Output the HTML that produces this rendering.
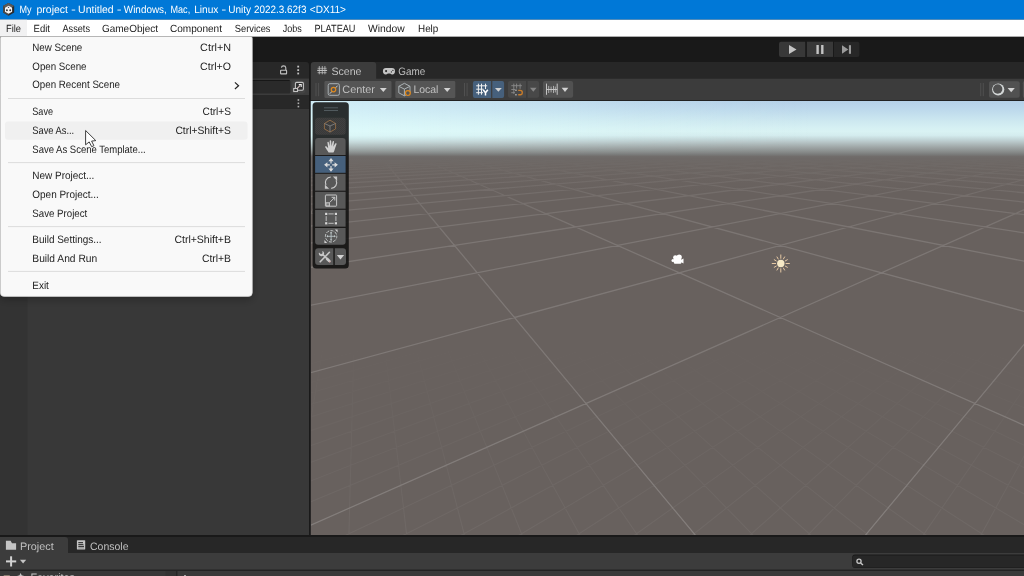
<!DOCTYPE html>
<html><head><meta charset="utf-8"><title>Unity</title>
<style>
html,body{margin:0;padding:0;background:#191919;overflow:hidden;}
svg{display:block;opacity:0.9999;}
text{font-family:"Liberation Sans",sans-serif;text-rendering:geometricPrecision;}
</style></head><body>
<svg width="1024" height="576" viewBox="0 0 1024 576">
<rect x="0" y="0" width="1024" height="576" fill="#191919" />
<rect x="0" y="0" width="1024" height="19.7" fill="#0078d7" />
<rect x="0" y="19.7" width="1024" height="17.1" fill="#ffffff" />
<rect x="0" y="36.8" width="1024" height="25.2" fill="#191919" />
<path d="M0 62 H306 Q309 62 309 65 V78.4 H0 Z" fill="#282828"/>
<rect x="0" y="78.4" width="309" height="17" fill="#3c3c3c" />
<rect x="0" y="80" width="290.4" height="13.5" fill="#2a2a2a" rx="1.5" />
<rect x="0" y="79.9" width="289.6" height="1" fill="#161616" />
<rect x="0" y="95" width="309" height="13.8" fill="#282828" />
<rect x="0" y="108.8" width="309" height="426.2" fill="#383838" />
<rect x="0" y="108.8" width="27.5" height="426.2" fill="#333333" />
<path d="M310.8 100.2 V65 Q310.8 62 313.8 62 H1024 V100.2 Z" fill="#3c3c3c"/>
<path d="M376.2 78.7 V65 Q376.2 62 373.2 62 H1024 V78.7 Z" fill="#272727"/>
<rect x="310.8" y="100.1" width="713.2" height="1.1" fill="#232323" />
<rect x="0" y="535" width="1024" height="2" fill="#191919" />
<rect x="0" y="537" width="1024" height="32.8" fill="#3c3c3c" />
<path d="M68 553.1 V540 Q68 537 65 537 H1024 V553.1 Z" fill="#272727"/>
<rect x="0" y="569.8" width="1024" height="1.2" fill="#232323" />
<rect x="0" y="571" width="1024" height="5" fill="#383838" />
<rect x="165.5" y="571" width="10.7" height="5" fill="#333333" />
<rect x="176.2" y="571" width="1.4" height="5" fill="#232323" />
<rect x="177.6" y="571" width="846.4" height="5" fill="#3a3a3a" />
<rect x="852.2" y="554.5" width="180" height="13.4" fill="#1b1b1b" rx="3" />
<rect x="852.6" y="555.6" width="180" height="12" fill="#272727" rx="2.6" />
<defs>
<clipPath id="sc"><rect x="310.8" y="101" width="713.2" height="434"/></clipPath>
<linearGradient id="sky" gradientUnits="userSpaceOnUse" x1="0" y1="101" x2="0" y2="535">
<stop offset="0.00000" stop-color="#b5d0e8"/>
<stop offset="0.02166" stop-color="#bedaec"/>
<stop offset="0.04562" stop-color="#cde8f0"/>
<stop offset="0.06221" stop-color="#d6f0f3"/>
<stop offset="0.07028" stop-color="#d9f2f3"/>
<stop offset="0.07926" stop-color="#d4ecee"/>
<stop offset="0.08756" stop-color="#c4d8da"/>
<stop offset="0.09378" stop-color="#b9c8ca"/>
<stop offset="0.10576" stop-color="#a0a8a8"/>
<stop offset="0.11774" stop-color="#878a89"/>
<stop offset="0.12442" stop-color="#777776"/>
<stop offset="0.12811" stop-color="#706c6a"/>
<stop offset="0.13249" stop-color="#6e6967"/>
<stop offset="0.14977" stop-color="#6c6663"/>
<stop offset="0.17512" stop-color="#6a6360"/>
<stop offset="0.20968" stop-color="#68615e"/>
<stop offset="1.00000" stop-color="#68615e"/>
</linearGradient>
<linearGradient id="fadeM" gradientUnits="userSpaceOnUse" x1="0" y1="157" x2="0" y2="277">
<stop offset="0" stop-color="#fff" stop-opacity="0"/><stop offset="0.07" stop-color="#fff" stop-opacity="0.14"/><stop offset="0.19" stop-color="#fff" stop-opacity="0.38"/><stop offset="0.4" stop-color="#fff" stop-opacity="0.68"/><stop offset="0.65" stop-color="#fff" stop-opacity="0.9"/><stop offset="1" stop-color="#fff" stop-opacity="1"/>
</linearGradient>
<mask id="mM" maskUnits="userSpaceOnUse" x="310.8" y="101" width="713.2" height="434"><rect x="310.8" y="101" width="713.2" height="434" fill="url(#fadeM)"/></mask>
<linearGradient id="fadeS" gradientUnits="userSpaceOnUse" x1="0" y1="330" x2="0" y2="535">
<stop offset="0" stop-color="#fff" stop-opacity="0"/><stop offset="0.44" stop-color="#fff" stop-opacity="0.5"/><stop offset="1" stop-color="#fff" stop-opacity="1"/>
</linearGradient>
<mask id="mS" maskUnits="userSpaceOnUse" x="310.8" y="101" width="713.2" height="434"><rect x="310.8" y="101" width="713.2" height="434" fill="url(#fadeS)"/></mask>
</defs>
<rect x="310.8" y="101" width="713.2" height="434" fill="url(#sky)"/>
<defs><linearGradient id="skyL" gradientUnits="userSpaceOnUse" x1="311" y1="0" x2="811" y2="0"><stop offset="0" stop-color="#e1ffff" stop-opacity="0.6"/><stop offset="0.1" stop-color="#e1ffff" stop-opacity="0.55"/><stop offset="0.4" stop-color="#e1ffff" stop-opacity="0.35"/><stop offset="0.62" stop-color="#e1ffff" stop-opacity="0.18"/><stop offset="0.82" stop-color="#e1ffff" stop-opacity="0.06"/><stop offset="1" stop-color="#e1ffff" stop-opacity="0"/></linearGradient>
<linearGradient id="skyLm" gradientUnits="userSpaceOnUse" x1="0" y1="100" x2="0" y2="156"><stop offset="0" stop-color="#fff"/><stop offset="0.64" stop-color="#fff"/><stop offset="0.8" stop-color="#fff" stop-opacity="0.45"/><stop offset="1" stop-color="#fff" stop-opacity="0"/></linearGradient>
<mask id="mSky" maskUnits="userSpaceOnUse" x="310" y="100" width="720" height="60"><rect x="310" y="100" width="720" height="60" fill="url(#skyLm)"/></mask></defs>
<g mask="url(#mSky)"><rect x="310.8" y="101" width="510" height="58" fill="url(#skyL)"/></g>
<g clip-path="url(#sc)"><g mask="url(#mS)"><path d="M-100041.9 5344.4L1044.9 139.5M-99296.5 5344.4L1046.1 139.5M-98551.0 5344.4L1047.2 139.5M-97805.6 5344.4L1048.4 139.5M-97060.1 5344.4L1049.5 139.5M-96314.7 5344.4L1050.7 139.5M-95569.2 5344.4L1051.8 139.5M-94823.8 5344.4L1053.0 139.5M-94078.3 5344.4L1054.1 139.5M-93332.9 5344.4L1055.3 139.5M-92587.4 5344.4L1056.4 139.5M-91842.0 5344.4L1057.6 139.5M-91096.5 5344.4L1058.7 139.5M-90351.1 5344.4L1059.9 139.5M-89605.6 5344.4L1061.0 139.5M-88860.2 5344.4L1062.2 139.5M-88114.7 5344.4L1063.3 139.5M-87369.3 5344.4L1064.5 139.5M-86623.8 5344.4L1065.6 139.5M-85878.4 5344.4L1066.8 139.5M-85132.9 5344.4L1067.9 139.5M-84387.5 5344.4L1069.1 139.5M-83642.0 5344.4L1070.2 139.5M-82896.6 5344.4L1071.4 139.5M-82151.1 5344.4L1072.5 139.5M-81405.7 5344.4L1073.7 139.5M-80660.2 5344.4L1074.8 139.5M-79914.7 5344.4L1076.0 139.5M-79169.3 5344.4L1077.1 139.5M-78423.8 5344.4L1078.3 139.5M-77678.4 5344.4L1079.4 139.5M-76932.9 5344.4L1080.6 139.5M-76187.5 5344.4L1081.7 139.5M-75442.0 5344.4L1082.9 139.5M-74696.6 5344.4L1084.0 139.5M-73951.1 5344.4L1085.2 139.5M-73205.7 5344.4L1086.3 139.5M-72460.2 5344.4L1087.5 139.5M-71714.8 5344.4L1088.6 139.5M-70969.3 5344.4L1089.8 139.5M-70223.9 5344.4L1090.9 139.5M-69478.4 5344.4L1092.1 139.5M-68733.0 5344.4L1093.2 139.5M-67987.5 5344.4L1094.4 139.5M-67242.1 5344.4L1095.5 139.5M-66496.6 5344.4L1096.7 139.5M-65751.2 5344.4L1097.8 139.5M-65005.7 5344.4L1099.0 139.5M-64260.3 5344.4L1100.1 139.5M-63514.8 5344.4L1101.3 139.5M-62769.4 5344.4L1102.4 139.5M-62023.9 5344.4L1103.6 139.5M-61278.5 5344.4L1104.7 139.5M-60533.0 5344.4L1105.9 139.5M-59787.6 5344.4L1107.0 139.5M-59042.1 5344.4L1108.2 139.5M-58296.6 5344.4L1109.3 139.5M-57551.2 5344.4L1110.5 139.5M-34069.5 5344.4L306.5 139.5M-56805.7 5344.4L1111.6 139.5M-33324.0 5344.4L307.7 139.5M-56060.3 5344.4L1112.8 139.5M-32578.6 5344.4L308.8 139.5M-55314.8 5344.4L1113.9 139.5M-31833.1 5344.4L310.0 139.5M-54569.4 5344.4L1115.1 139.5M-31087.7 5344.4L311.1 139.5M-53823.9 5344.4L1116.2 139.5M-30342.2 5344.4L312.3 139.5M-53078.5 5344.4L1117.4 139.5M-29596.8 5344.4L313.4 139.5M-52333.0 5344.4L1118.5 139.5M-28851.3 5344.4L314.6 139.5M-51587.6 5344.4L1119.7 139.5M-28105.9 5344.4L315.7 139.5M-50842.1 5344.4L1120.8 139.5M-27360.4 5344.4L316.9 139.5M-50096.7 5344.4L1122.0 139.5M-26615.0 5344.4L318.0 139.5M-49351.2 5344.4L1123.1 139.5M-25869.5 5344.4L319.2 139.5M-48605.8 5344.4L1124.3 139.5M-25124.0 5344.4L320.3 139.5M-47860.3 5344.4L1125.4 139.5M-24378.6 5344.4L321.5 139.5M-47114.9 5344.4L1126.6 139.5M-23633.1 5344.4L322.6 139.5M-46369.4 5344.4L1127.7 139.5M-22887.7 5344.4L323.8 139.5M-45624.0 5344.4L1128.9 139.5M-22142.2 5344.4L324.9 139.5M-44878.5 5344.4L1130.0 139.5M-21396.8 5344.4L326.1 139.5M-44133.1 5344.4L1131.2 139.5M-20651.3 5344.4L327.2 139.5M-43387.6 5344.4L1132.3 139.5M-19905.9 5344.4L328.4 139.5M-42642.2 5344.4L1133.5 139.5M-19160.4 5344.4L329.5 139.5M-41896.7 5344.4L1134.6 139.5M-18415.0 5344.4L330.7 139.5M-41151.3 5344.4L1135.8 139.5M-17669.5 5344.4L331.8 139.5M-40405.8 5344.4L1136.9 139.5M-16924.1 5344.4L333.0 139.5M-39660.4 5344.4L1138.1 139.5M-16178.6 5344.4L334.1 139.5M-38914.9 5344.4L1139.2 139.5M-15433.2 5344.4L335.3 139.5M-38169.5 5344.4L1140.4 139.5M-14687.7 5344.4L336.4 139.5M-37424.0 5344.4L1141.5 139.5M-13942.3 5344.4L337.6 139.5M-36678.5 5344.4L1142.7 139.5M-13196.8 5344.4L338.7 139.5M-35933.1 5344.4L1143.8 139.5M-12451.4 5344.4L339.9 139.5M-35187.6 5344.4L1145.0 139.5M-11705.9 5344.4L341.0 139.5M-34442.2 5344.4L1146.1 139.5M-10960.5 5344.4L342.2 139.5M-33696.7 5344.4L1147.3 139.5M-10215.0 5344.4L343.3 139.5M-32951.3 5344.4L1148.4 139.5M-9469.6 5344.4L344.5 139.5M-32205.8 5344.4L1149.6 139.5M-8724.1 5344.4L345.6 139.5M-31460.4 5344.4L1150.7 139.5M-7978.7 5344.4L346.8 139.5M-30714.9 5344.4L1151.9 139.5M-7233.2 5344.4L347.9 139.5M-29969.5 5344.4L1153.0 139.5M-6487.8 5344.4L349.1 139.5M-29224.0 5344.4L1154.2 139.5M-5742.3 5344.4L350.2 139.5M-28478.6 5344.4L1155.3 139.5M-4996.9 5344.4L351.4 139.5M-27733.1 5344.4L1156.5 139.5M-4251.4 5344.4L352.5 139.5M-26987.7 5344.4L1157.6 139.5M-3505.9 5344.4L353.7 139.5M-26242.2 5344.4L1158.8 139.5M-2760.5 5344.4L354.8 139.5M-25496.8 5344.4L1159.9 139.5M-2015.0 5344.4L356.0 139.5M-24751.3 5344.4L1161.1 139.5M-1269.6 5344.4L357.1 139.5M-24005.9 5344.4L1162.2 139.5M-524.1 5344.4L358.3 139.5M-23260.4 5344.4L1163.4 139.5M221.3 5344.4L359.4 139.5M-22515.0 5344.4L1164.5 139.5M966.8 5344.4L360.6 139.5M-21769.5 5344.4L1165.7 139.5M1712.2 5344.4L361.8 139.5M-21024.1 5344.4L1166.8 139.5M2457.7 5344.4L362.9 139.5M-20278.6 5344.4L1168.0 139.5M3203.1 5344.4L364.1 139.5M-19533.2 5344.4L1169.1 139.5M3948.6 5344.4L365.2 139.5M-18787.7 5344.4L1170.3 139.5M4694.0 5344.4L366.4 139.5M-18042.3 5344.4L1171.4 139.5M5439.5 5344.4L367.5 139.5M-17296.8 5344.4L1172.6 139.5M6184.9 5344.4L368.7 139.5M-16551.4 5344.4L1173.7 139.5M6930.4 5344.4L369.8 139.5M-15805.9 5344.4L1174.9 139.5M7675.8 5344.4L371.0 139.5M-15060.4 5344.4L1176.0 139.5M8421.3 5344.4L372.1 139.5M-14315.0 5344.4L1177.2 139.5M9166.7 5344.4L373.3 139.5M-13569.5 5344.4L1178.3 139.5M9912.2 5344.4L374.4 139.5M-12824.1 5344.4L1179.5 139.5M10657.6 5344.4L375.6 139.5M-12078.6 5344.4L1180.6 139.5M11403.1 5344.4L376.7 139.5M-11333.2 5344.4L1181.8 139.5M12148.5 5344.4L377.9 139.5M-10587.7 5344.4L1182.9 139.5M12894.0 5344.4L379.0 139.5M-9842.3 5344.4L1184.1 139.5M13639.4 5344.4L380.2 139.5M-9096.8 5344.4L1185.2 139.5M14384.9 5344.4L381.3 139.5M-8351.4 5344.4L1186.4 139.5M15130.3 5344.4L382.5 139.5M-7605.9 5344.4L1187.5 139.5M15875.8 5344.4L383.6 139.5M-6860.5 5344.4L1188.7 139.5M16621.2 5344.4L384.8 139.5M-6115.0 5344.4L1189.8 139.5M17366.7 5344.4L385.9 139.5M-5369.6 5344.4L1191.0 139.5M18112.2 5344.4L387.1 139.5M-4624.1 5344.4L1192.1 139.5M18857.6 5344.4L388.2 139.5M-3878.7 5344.4L1193.3 139.5M19603.1 5344.4L389.4 139.5M-3133.2 5344.4L1194.4 139.5M20348.5 5344.4L390.5 139.5M-2387.8 5344.4L1195.6 139.5M21094.0 5344.4L391.7 139.5M-1642.3 5344.4L1196.7 139.5M21839.4 5344.4L392.8 139.5M-896.9 5344.4L1197.9 139.5M22584.9 5344.4L394.0 139.5M-151.4 5344.4L1199.0 139.5M23330.3 5344.4L395.1 139.5M594.0 5344.4L1200.2 139.5M24075.8 5344.4L396.3 139.5M24821.2 5344.4L397.4 139.5M25566.7 5344.4L398.6 139.5M26312.1 5344.4L399.7 139.5M27057.6 5344.4L400.9 139.5M27803.0 5344.4L402.0 139.5M28548.5 5344.4L403.2 139.5M29293.9 5344.4L404.3 139.5M30039.4 5344.4L405.5 139.5M30784.8 5344.4L406.6 139.5M31530.3 5344.4L407.8 139.5M32275.7 5344.4L408.9 139.5M33021.2 5344.4L410.1 139.5M33766.6 5344.4L411.2 139.5M34512.1 5344.4L412.4 139.5M35257.5 5344.4L413.5 139.5M36003.0 5344.4L414.7 139.5M36748.4 5344.4L415.8 139.5M37493.9 5344.4L417.0 139.5M38239.3 5344.4L418.1 139.5M38984.8 5344.4L419.3 139.5M39730.3 5344.4L420.4 139.5M40475.7 5344.4L421.6 139.5M41221.2 5344.4L422.7 139.5M41966.6 5344.4L423.9 139.5M42712.1 5344.4L425.0 139.5M43457.5 5344.4L426.2 139.5M44203.0 5344.4L427.3 139.5M44948.4 5344.4L428.5 139.5M45693.9 5344.4L429.6 139.5M46439.3 5344.4L430.8 139.5M47184.8 5344.4L431.9 139.5M47930.2 5344.4L433.1 139.5M48675.7 5344.4L434.2 139.5M49421.1 5344.4L435.4 139.5M50166.6 5344.4L436.5 139.5M50912.0 5344.4L437.7 139.5M51657.5 5344.4L438.8 139.5M52402.9 5344.4L440.0 139.5M53148.4 5344.4L441.1 139.5M53893.8 5344.4L442.3 139.5M54639.3 5344.4L443.4 139.5M55384.7 5344.4L444.6 139.5M56130.2 5344.4L445.7 139.5M56875.6 5344.4L446.9 139.5M57621.1 5344.4L448.0 139.5M58366.5 5344.4L449.2 139.5M59112.0 5344.4L450.3 139.5M59857.4 5344.4L451.5 139.5M60602.9 5344.4L452.6 139.5M61348.4 5344.4L453.8 139.5M62093.8 5344.4L454.9 139.5M62839.3 5344.4L456.1 139.5M63584.7 5344.4L457.2 139.5M64330.2 5344.4L458.4 139.5M65075.6 5344.4L459.5 139.5M65821.1 5344.4L460.7 139.5M66566.5 5344.4L461.8 139.5M67312.0 5344.4L463.0 139.5M68057.4 5344.4L464.1 139.5M68802.9 5344.4L465.3 139.5M69548.3 5344.4L466.4 139.5M70293.8 5344.4L467.6 139.5M71039.2 5344.4L468.7 139.5M71784.7 5344.4L469.9 139.5M72530.1 5344.4L471.0 139.5M73275.6 5344.4L472.2 139.5M74021.0 5344.4L473.3 139.5M74766.5 5344.4L474.5 139.5M75511.9 5344.4L475.6 139.5M76257.4 5344.4L476.8 139.5M77002.8 5344.4L477.9 139.5M77748.3 5344.4L479.1 139.5M78493.7 5344.4L480.2 139.5M79239.2 5344.4L481.4 139.5M79984.6 5344.4L482.5 139.5M80730.1 5344.4L483.7 139.5M81475.5 5344.4L484.8 139.5M82221.0 5344.4L486.0 139.5M82966.5 5344.4L487.1 139.5M83711.9 5344.4L488.3 139.5M84457.4 5344.4L489.4 139.5M85202.8 5344.4L490.6 139.5M85948.3 5344.4L491.7 139.5M86693.7 5344.4L492.9 139.5M87439.2 5344.4L494.0 139.5M88184.6 5344.4L495.2 139.5M88930.1 5344.4L496.3 139.5M89675.5 5344.4L497.5 139.5M90421.0 5344.4L498.6 139.5M91166.4 5344.4L499.8 139.5M91911.9 5344.4L500.9 139.5M92657.3 5344.4L502.1 139.5M93402.8 5344.4L503.2 139.5M94148.2 5344.4L504.4 139.5M94893.7 5344.4L505.5 139.5M95639.1 5344.4L506.7 139.5M96384.6 5344.4L507.8 139.5M97130.0 5344.4L509.0 139.5M97875.5 5344.4L510.1 139.5M98620.9 5344.4L511.3 139.5M99366.4 5344.4L512.4 139.5M100111.8 5344.4L513.6 139.5M100857.3 5344.4L514.7 139.5M101602.7 5344.4L515.9 139.5" stroke="#ffffff" stroke-width="1.1" stroke-opacity="0.052" fill="none"/></g></g>
<g clip-path="url(#sc)"><g mask="url(#mM)"><path d="M-577131.0 5344.4L308.8 139.5M-569676.5 5344.4L320.3 139.5M-562222.0 5344.4L331.8 139.5M-554767.5 5344.4L343.3 139.5M-547313.0 5344.4L354.8 139.5M-539858.4 5344.4L366.4 139.5M-532403.9 5344.4L377.9 139.5M-524949.4 5344.4L389.4 139.5M-517494.9 5344.4L400.9 139.5M-510040.4 5344.4L412.4 139.5M-502585.9 5344.4L423.9 139.5M-495131.3 5344.4L435.4 139.5M-487676.8 5344.4L446.9 139.5M-480222.3 5344.4L458.4 139.5M-472767.8 5344.4L469.9 139.5M-465313.3 5344.4L481.4 139.5M-457858.8 5344.4L492.9 139.5M-450404.2 5344.4L504.4 139.5M-442949.7 5344.4L515.9 139.5M-435495.2 5344.4L527.4 139.5M-428040.7 5344.4L538.9 139.5M-420586.2 5344.4L550.4 139.5M-413131.7 5344.4L561.9 139.5M-405677.1 5344.4L573.4 139.5M-398222.6 5344.4L584.9 139.5M-390768.1 5344.4L596.4 139.5M-383313.6 5344.4L607.9 139.5M-375859.1 5344.4L619.4 139.5M-368404.6 5344.4L630.9 139.5M-360950.0 5344.4L642.4 139.5M-353495.5 5344.4L653.9 139.5M-346041.0 5344.4L665.4 139.5M-338586.5 5344.4L676.9 139.5M-331132.0 5344.4L688.4 139.5M-323677.5 5344.4L699.9 139.5M-316222.9 5344.4L711.4 139.5M-308768.4 5344.4L722.9 139.5M-301313.9 5344.4L734.4 139.5M-293859.4 5344.4L745.9 139.5M-286404.9 5344.4L757.4 139.5M-278950.4 5344.4L768.9 139.5M-271495.8 5344.4L780.4 139.5M-264041.3 5344.4L791.9 139.5M-256586.8 5344.4L803.4 139.5M-249132.3 5344.4L814.9 139.5M-241677.8 5344.4L826.4 139.5M-234223.2 5344.4L837.9 139.5M-226768.7 5344.4L849.4 139.5M-219314.2 5344.4L860.9 139.5M-211859.7 5344.4L872.4 139.5M-204405.2 5344.4L883.9 139.5M-196950.7 5344.4L895.4 139.5M-189496.1 5344.4L906.9 139.5M-182041.6 5344.4L918.4 139.5M-174587.1 5344.4L929.9 139.5M-167132.6 5344.4L941.4 139.5M-159678.1 5344.4L952.9 139.5M-152223.6 5344.4L964.4 139.5M-144769.0 5344.4L975.9 139.5M-137314.5 5344.4L987.4 139.5M-129860.0 5344.4L998.9 139.5M-122405.5 5344.4L1010.4 139.5M-114951.0 5344.4L1021.9 139.5M-107496.5 5344.4L1033.4 139.5M-100041.9 5344.4L1044.9 139.5M-92587.4 5344.4L1056.4 139.5M-85132.9 5344.4L1067.9 139.5M-77678.4 5344.4L1079.4 139.5M-70223.9 5344.4L1090.9 139.5M-62769.4 5344.4L1102.4 139.5M-32578.6 5344.4L308.8 139.5M-55314.8 5344.4L1113.9 139.5M-25124.0 5344.4L320.3 139.5M-47860.3 5344.4L1125.4 139.5M-17669.5 5344.4L331.8 139.5M-40405.8 5344.4L1136.9 139.5M-10215.0 5344.4L343.3 139.5M-32951.3 5344.4L1148.4 139.5M-2760.5 5344.4L354.8 139.5M-25496.8 5344.4L1159.9 139.5M4694.0 5344.4L366.4 139.5M-18042.3 5344.4L1171.4 139.5M12148.5 5344.4L377.9 139.5M-10587.7 5344.4L1182.9 139.5M19603.1 5344.4L389.4 139.5M-3133.2 5344.4L1194.4 139.5M27057.6 5344.4L400.9 139.5M34512.1 5344.4L412.4 139.5M41966.6 5344.4L423.9 139.5M49421.1 5344.4L435.4 139.5M56875.6 5344.4L446.9 139.5M64330.2 5344.4L458.4 139.5M71784.7 5344.4L469.9 139.5M79239.2 5344.4L481.4 139.5M86693.7 5344.4L492.9 139.5M94148.2 5344.4L504.4 139.5M101602.7 5344.4L515.9 139.5M109057.3 5344.4L527.4 139.5M116511.8 5344.4L538.9 139.5M123966.3 5344.4L550.4 139.5M131420.8 5344.4L561.9 139.5M138875.3 5344.4L573.4 139.5M146329.8 5344.4L584.9 139.5M153784.4 5344.4L596.4 139.5M161238.9 5344.4L607.9 139.5M168693.4 5344.4L619.4 139.5M176147.9 5344.4L630.9 139.5M183602.4 5344.4L642.4 139.5M191056.9 5344.4L653.9 139.5M198511.5 5344.4L665.4 139.5M205966.0 5344.4L676.9 139.5M213420.5 5344.4L688.4 139.5M220875.0 5344.4L699.9 139.5M228329.5 5344.4L711.4 139.5M235784.0 5344.4L722.9 139.5M243238.6 5344.4L734.4 139.5M250693.1 5344.4L745.9 139.5M258147.6 5344.4L757.4 139.5M265602.1 5344.4L768.9 139.5M273056.6 5344.4L780.4 139.5M280511.2 5344.4L791.9 139.5M287965.7 5344.4L803.4 139.5M295420.2 5344.4L814.9 139.5M302874.7 5344.4L826.4 139.5M310329.2 5344.4L837.9 139.5M317783.7 5344.4L849.4 139.5M325238.3 5344.4L860.9 139.5M332692.8 5344.4L872.4 139.5M340147.3 5344.4L883.9 139.5M347601.8 5344.4L895.4 139.5M355056.3 5344.4L906.9 139.5M362510.8 5344.4L918.4 139.5M369965.4 5344.4L929.9 139.5M377419.9 5344.4L941.4 139.5M384874.4 5344.4L952.9 139.5M392328.9 5344.4L964.4 139.5M399783.4 5344.4L975.9 139.5M407237.9 5344.4L987.4 139.5M414692.5 5344.4L998.9 139.5M422147.0 5344.4L1010.4 139.5M429601.5 5344.4L1021.9 139.5" stroke="#ffffff" stroke-width="1.3" stroke-opacity="0.15" fill="none"/></g></g>
<g>
<path d="M8.65 2.9 L14.2 6.1 V12.5 L8.65 15.7 L3.1 12.5 V6.1 Z" fill="#2b2b2b"/>
<path d="M8.65 2.9 L3.1 6.1 V12.5 L8.65 15.7 Z" fill="#4a4a4a"/>
<path d="M8.65 2.9 L14.2 6.1 L8.65 9.3 L3.1 6.1 Z" fill="#5a5a5a"/>
<path d="M8.6 5.7 L12.1 7.7 V11.7 L8.6 13.7 L5 11.7 V7.7 Z" fill="#f4f4f4"/>
<circle cx="6.9" cy="10.3" r="0.95" fill="#333"/><circle cx="10.2" cy="10.3" r="0.95" fill="#333"/><circle cx="8.5" cy="7.4" r="0.7" fill="#556"/>
</g>
<text x="19.5" y="13.4" font-size="10.6" fill="#ffffff" textLength="12.1" lengthAdjust="spacingAndGlyphs" >My</text>
<text x="36.5" y="13.4" font-size="10.6" fill="#ffffff" textLength="31.5" lengthAdjust="spacingAndGlyphs" >project</text>
<rect x="71.7" y="9.6" width="3.5" height="0.9" fill="#ffffff" />
<text x="78.1" y="13.4" font-size="10.6" fill="#ffffff" textLength="35.6" lengthAdjust="spacingAndGlyphs" >Untitled</text>
<rect x="117.4" y="9.6" width="3.5" height="0.9" fill="#ffffff" />
<text x="123.8" y="13.4" font-size="10.6" fill="#ffffff" textLength="43.0" lengthAdjust="spacingAndGlyphs" >Windows,</text>
<text x="170.5" y="13.4" font-size="10.6" fill="#ffffff" textLength="19.7" lengthAdjust="spacingAndGlyphs" >Mac,</text>
<text x="194.15" y="13.4" font-size="10.6" fill="#ffffff" textLength="24.25" lengthAdjust="spacingAndGlyphs" >Linux</text>
<rect x="222" y="9.6" width="3.6" height="0.9" fill="#ffffff" />
<text x="228.2" y="13.4" font-size="10.6" fill="#ffffff" textLength="22.95" lengthAdjust="spacingAndGlyphs" >Unity</text>
<text x="254.0" y="13.4" font-size="10.6" fill="#ffffff" textLength="52.4" lengthAdjust="spacingAndGlyphs" >2022.3.62f3</text>
<text x="309.8" y="13.4" font-size="10.6" fill="#ffffff" textLength="36.2" lengthAdjust="spacingAndGlyphs" >&lt;DX11&gt;</text>
<rect x="0" y="19.7" width="27" height="16.2" fill="#f1f1f2" />
<text x="6" y="31.6" font-size="10.4" fill="#1a1a1a" textLength="15" lengthAdjust="spacingAndGlyphs" >File</text>
<text x="33.6" y="31.6" font-size="10.4" fill="#1a1a1a" textLength="16.4" lengthAdjust="spacingAndGlyphs" >Edit</text>
<text x="62.5" y="31.6" font-size="10.4" fill="#1a1a1a" textLength="27.5" lengthAdjust="spacingAndGlyphs" >Assets</text>
<text x="102" y="31.6" font-size="10.4" fill="#1a1a1a" textLength="56" lengthAdjust="spacingAndGlyphs" >GameObject</text>
<text x="170" y="31.6" font-size="10.4" fill="#1a1a1a" textLength="52" lengthAdjust="spacingAndGlyphs" >Component</text>
<text x="234.8" y="31.6" font-size="10.4" fill="#1a1a1a" textLength="35.7" lengthAdjust="spacingAndGlyphs" >Services</text>
<text x="282.8" y="31.6" font-size="10.4" fill="#1a1a1a" textLength="19.0" lengthAdjust="spacingAndGlyphs" >Jobs</text>
<text x="314.4" y="31.6" font-size="10.4" fill="#1a1a1a" textLength="41.1" lengthAdjust="spacingAndGlyphs" >PLATEAU</text>
<text x="368" y="31.6" font-size="10.4" fill="#1a1a1a" textLength="36.7" lengthAdjust="spacingAndGlyphs" >Window</text>
<text x="418" y="31.6" font-size="10.4" fill="#1a1a1a" textLength="20.3" lengthAdjust="spacingAndGlyphs" >Help</text>
<path d="M781 41.7 H805.2 V56.9 H781 Q779 56.9 779 54.9 V43.7 Q779 41.7 781 41.7 Z" fill="#383838"/>
<rect x="806.9" y="41.7" width="26.1" height="15.2" fill="#383838" />
<path d="M834 41.7 H857.4 Q859.4 41.7 859.4 43.7 V54.9 Q859.4 56.9 857.4 56.9 H834 Z" fill="#272727"/>
<path d="M789 45 L796.5 49.5 L789 54 Z" fill="#c4c4c4"/>
<rect x="816.4" y="45" width="2.4" height="9" fill="#c4c4c4" />
<rect x="821.1" y="45" width="2.4" height="9" fill="#c4c4c4" />
<path d="M842 45.2 L848.3 49.5 L842 53.8 Z" fill="#9a9a9a"/>
<rect x="848.9" y="45.2" width="2.1" height="8.6" fill="#9a9a9a" />
<g fill="none" stroke="#c4c4c4" stroke-width="1.1"><rect x="280.6" y="70.2" width="6" height="3.7" rx="0.5"/><path d="M281.4 67.6 Q281.6 65.9 283.6 65.9 Q285.6 65.9 285.8 67.8 V70"/></g>
<rect x="297.3" y="65.69999999999999" width="1.8" height="1.8" fill="#c4c4c4" />
<rect x="297.3" y="69.19999999999999" width="1.8" height="1.8" fill="#c4c4c4" />
<rect x="297.3" y="72.6" width="1.8" height="1.8" fill="#c4c4c4" />
<rect x="297.6" y="99.2" width="1.6" height="1.6" fill="#b0b0b0" />
<rect x="297.6" y="102.5" width="1.6" height="1.6" fill="#b0b0b0" />
<rect x="297.6" y="105.8" width="1.6" height="1.6" fill="#b0b0b0" />
<rect x="292" y="80.5" width="13.4" height="13" fill="#434343" rx="3" />
<g fill="none" stroke="#c4c4c4" stroke-width="1.1"><rect x="295.4" y="82.4" width="8" height="7.9" rx="1.2" fill="#303030"/><rect x="293.7" y="88.5" width="3.8" height="3" fill="#303030"/><path d="M297.3 88.3 L299.9 85.6" stroke="#d8c4c4"/><path d="M298.8 84.6 H301.2 V87" stroke="#f0f0f0"/></g>
<g stroke="#c4c4c4" stroke-width="0.9" fill="none">
<path d="M319.3 66 V74.3 M322.3 66 V74.3 M324.9 66 V74.3" stroke-opacity="0.85"/>
<path d="M317.6 68.3 H326.6 M317.6 72.7 H326.6" stroke-opacity="0.8"/><path d="M317.2 70.4 H327.1" stroke-width="1.1"/>
</g>
<text x="331.4" y="75" font-size="10.8" fill="#c0c0c0" textLength="30.1" lengthAdjust="spacingAndGlyphs" >Scene</text>
<path d="M386 68.1 H392 Q395 68.1 395 71.3 Q395 74.4 392.3 74.4 Q391 74.4 390.2 73.4 H387.8 Q387 74.4 385.7 74.4 Q382.9 74.4 382.9 71.3 Q382.9 68.1 386 68.1 Z" fill="#c4c4c4"/>
<circle cx="386.1" cy="71.1" r="1.05" fill="#282828"/><circle cx="391.4" cy="71.9" r="0.65" fill="#282828"/><circle cx="392.9" cy="70.4" r="0.65" fill="#282828"/>
<text x="398.3" y="74.8" font-size="10.8" fill="#c0c0c0" textLength="26.9" lengthAdjust="spacingAndGlyphs" >Game</text>
<rect x="315.5" y="83" width="1" height="13.2" fill="#505050" />
<rect x="318.1" y="83" width="1" height="13.2" fill="#505050" />
<rect x="464" y="83" width="1" height="13.2" fill="#505050" />
<rect x="466.6" y="83" width="1" height="13.2" fill="#505050" />
<rect x="980.2" y="83" width="1" height="13.2" fill="#505050" />
<rect x="982.8000000000001" y="83" width="1" height="13.2" fill="#505050" />
<rect x="324.4" y="81.1" width="67.1" height="17" fill="#555555" rx="1.3" />
<rect x="328.2" y="83.7" width="11.2" height="11.6" rx="1.6" fill="none" stroke="#aab1b4" stroke-width="1"/>
<path d="M329.8 93.7 L337.7 85.6" stroke="#c8cccc" stroke-width="1"/>
<circle cx="333.5" cy="89.6" r="2.25" fill="#555555" stroke="#e08a1e" stroke-width="1.15"/>
<text x="342.3" y="93.2" font-size="10.8" fill="#c0c0c0" textLength="32.6" lengthAdjust="spacingAndGlyphs" >Center</text>
<path d="M379.85 88.05 H386.75 L383.3 91.95 Z" fill="#d2d2d2"/>
<rect x="395.3" y="81.1" width="60" height="17" fill="#555555" rx="1.3" />
<g fill="none" stroke="#aab1b4" stroke-width="1" stroke-linejoin="round"><path d="M404.4 83.3 L410 86.3 V92.8 L404.4 95.8 L398.8 92.8 V86.3 Z"/><path d="M398.8 86.3 L404.4 89.1 L410 86.3 M404.4 89.1 V95.8"/></g>
<circle cx="407.9" cy="93.1" r="2.4" fill="#555555" stroke="#e08a1e" stroke-width="1.2"/>
<text x="413.4" y="93.2" font-size="10.8" fill="#c0c0c0" textLength="25.0" lengthAdjust="spacingAndGlyphs" >Local</text>
<path d="M443.84999999999997 88.05 H450.55 L447.2 91.95 Z" fill="#d2d2d2"/>
<path d="M474.9 81 H491.1 V98 H474.9 Q472.9 98 472.9 96 V83 Q472.9 81 474.9 81 Z" fill="#46607c"/>
<path d="M492.3 81 H502.1 Q504.1 81 504.1 83 V96 Q504.1 98 502.1 98 H492.3 Z" fill="#46607c"/>
<g stroke="#f0f0f0" stroke-width="1" fill="none"><path d="M478.4 83.7 V94.7 M481.5 83.7 V94.7 M485.5 83.7 V89"/><path d="M476.2 85.8 H487.2 M476.2 89.2 H483.4 M476.2 92.7 H483"/></g>
<path d="M483.2 89.8 L485.5 92.7 V95.5 M487.8 89.8 L485.5 92.7" stroke="#ffffff" stroke-width="1.5" fill="none"/>
<path d="M495.0 87.95 H501.79999999999995 L498.4 91.85000000000001 Z" fill="#d2d2d2"/>
<path d="M510 81.1 H526 V97.8 H510 Q508 97.8 508 95.8 V83.1 Q508 81.1 510 81.1 Z" fill="#484848"/>
<path d="M527.6 81.1 H537.1 Q539.1 81.1 539.1 83.1 V95.8 Q539.1 97.8 537.1 97.8 H527.6 Z" fill="#484848"/>
<g stroke="#8a8a8a" stroke-width="0.9" fill="none"><path d="M513.8 83.6 V93.8 M516.6 83.6 V88.5 M520.1 83.6 V88.8"/><path d="M511.3 85.7 H521.9 M511.3 89.5 H515 M511.3 92.7 H515"/></g>
<rect x="515.2" y="89.5" width="1.5" height="1.5" fill="#a8a8a8" />
<rect x="515.2" y="94" width="1.5" height="1.5" fill="#a8a8a8" />
<path d="M518.2 90.3 H520.3 Q522.3 90.3 522.3 92.5 Q522.3 94.7 520.3 94.7 H518.2" fill="none" stroke="#c87c2a" stroke-width="1.35"/>
<path d="M530.0 87.85 H536.5999999999999 L533.3 91.75 Z" fill="#858585"/>
<rect x="543" y="81.1" width="30.1" height="16.7" fill="#515151" rx="2" />
<g stroke="#c4c4c4" stroke-width="1" fill="none"><path d="M546.5 83.6 V94.8 M557.2 83.6 V94.8"/><path d="M548.7 85.9 V93 M551.1 86.6 V92.4 M553.5 85.9 V93 M555.3 86.6 V92.4" stroke-opacity="0.8"/><path d="M546.5 89.5 H557.2"/></g>
<path d="M561.65 87.85000000000001 H568.35 L565 91.95 Z" fill="#d2d2d2"/>
<rect x="989" y="81.2" width="30.7" height="16.5" fill="#515151" rx="2" />
<circle cx="998.2" cy="89.5" r="6.1" fill="#d2d6d6"/><circle cx="997.7" cy="89" r="4.7" fill="#515151"/>
<path d="M1007.6 87.94999999999999 H1014.8000000000001 L1011.2 92.25 Z" fill="#d2d2d2"/>
<rect x="1022.8" y="81.2" width="3" height="16.5" fill="#515151" rx="2" />
<path d="M5.9 540.8 H10.6 L12 543.2 H16.1 V549.8 H5.9 Z" fill="#c4c4c4"/>
<text x="20" y="549.8" font-size="10.8" fill="#c0c0c0" textLength="33.7" lengthAdjust="spacingAndGlyphs" >Project</text>
<rect x="76.9" y="540.2" width="8.3" height="9.3" rx="0.6" fill="#c4c4c4"/>
<path d="M78.3 542.6 H83 M78.3 544.5 H83.4 M78.3 546.4 H84" stroke="#3a3a3a" stroke-width="1.1"/><path d="M78.3 547.9 H84" stroke="#555" stroke-width="0.6"/>
<text x="90" y="549.7" font-size="10.8" fill="#c0c0c0" textLength="38.5" lengthAdjust="spacingAndGlyphs" >Console</text>
<rect x="6" y="560.4" width="10.2" height="2" fill="#d2d2d2" />
<rect x="10.1" y="556.3" width="2" height="10.2" fill="#d2d2d2" />
<path d="M20.0 559.7 H26.200000000000003 L23.1 563.5 Z" fill="#c4c4c4"/>
<circle cx="859" cy="561.3" r="2.1" fill="none" stroke="#c8c8c8" stroke-width="1.3"/><path d="M860.6 562.9 L863 565.1" stroke="#c8c8c8" stroke-width="1.4"/>
<text x="30.5" y="580.8" font-size="10.8" fill="#c0c0c0" textLength="44.5" lengthAdjust="spacingAndGlyphs" >Favorites</text>
<path d="M20.6 572.9 L21.7 575.3 L24.2 576 H17 L19.5 575.3 Z" fill="#c4c4c4"/>
<rect x="3.7" y="575.2" width="6.1" height="1" fill="#a09080" />
<rect x="184.2" y="575" width="1.6" height="1" fill="#c4c4c4" />
<rect x="312.6" y="102.3" width="36.2" height="166.2" rx="3.5" fill="#0e0e0e" fill-opacity="0.86"/>
<rect x="324" y="107.3" width="14" height="1" fill="#515a5e" />
<rect x="324" y="110" width="14" height="1" fill="#515a5e" />
<defs><pattern id="dots" width="2" height="2" patternUnits="userSpaceOnUse"><rect width="2" height="2" fill="#404040"/><rect width="1" height="1" fill="#393939"/><rect x="1" y="1" width="1" height="1" fill="#393939"/></pattern></defs>
<rect x="315.1" y="117.8" width="30.5" height="17" rx="3" fill="url(#dots)"/>
<g fill="none" stroke-width="1" stroke-linejoin="round" stroke-opacity="0.78"><path d="M330 120.2 L335.6 123.5 V128.9 L330 132.1 L324.4 128.9 V123.5 Z" stroke="#a07448"/><path d="M324.4 123.5 L330 126 L335.6 123.5 M330 126 V132.1" stroke="#8a8a8a"/></g>
<path d="M318.1 138.1 H342.6 Q345.6 138.1 345.6 141.1 V155 H315.1 V141.1 Q315.1 138.1 318.1 138.1 Z" fill="#585858"/>
<path d="M328.6 152.6 C327.4 150.6 326 148.6 325.2 147.3 C324.8 146.4 325.8 145.8 326.6 146.6 L328.2 148.3 L327.4 142.6 C327.3 141.6 328.6 141.4 328.8 142.4 L329.7 146.3 L329.7 141 C329.7 139.9 331.1 139.9 331.2 141 L331.5 146.2 L332.6 141.6 C332.9 140.6 334.2 140.9 334 141.9 L333.3 146.7 L335.2 143.6 C335.8 142.8 336.9 143.4 336.5 144.3 C335.6 146.6 335 148.6 334.4 150.4 C334.1 151.4 333.7 152 333.4 152.6 Z" fill="#d2d2d2"/>
<rect x="315.1" y="156" width="30.5" height="16.8" fill="#46607c" />
<g stroke="#dcdcdc" stroke-width="1.15" fill="none"><path d="M331 160 V163.6 M331 166 V169.6 M326.2 164.8 H329.8 M332.2 164.8 H335.8"/></g>
<path d="M331 157.9 L333.6 161.2 H328.4 Z M331 171.7 L333.6 168.4 H328.4 Z M324.1 164.8 L327.4 162.2 V167.4 Z M337.9 164.8 L334.6 162.2 V167.4 Z" fill="#dcdcdc"/>
<rect x="315.1" y="173.8" width="30.5" height="16.9" fill="#585858" />
<g stroke="#c8c8c8" stroke-width="1.15" fill="none"><path d="M336.1 180.2 A5.7 5.7 0 0 1 331.2 188.4"/><path d="M325.9 185.2 A5.7 5.7 0 0 1 330.8 177"/></g>
<path d="M332.9 176.6 H337.1 V180.9 Z" fill="#c8c8c8"/><path d="M329.1 188.8 H324.9 V184.5 Z" fill="#c8c8c8"/>
<rect x="315.1" y="191.8" width="30.5" height="16.9" fill="#585858" />
<g stroke="#c8c8c8" stroke-width="1" fill="none"><rect x="325.4" y="195" width="11.2" height="11.2" rx="0.6"/><rect x="326" y="202.8" width="3.4" height="3.1" fill="#777"/><path d="M329.8 202.4 L334.6 197.5 M331.6 197.3 H334.8 V200.5"/></g>
<rect x="315.1" y="209.8" width="30.5" height="16.9" fill="#585858" />
<g fill="#d8d8d8">
<rect x="325.1" y="212.8" width="2.2" height="2.2"/>
<rect x="325.1" y="222.2" width="2.2" height="2.2"/>
<rect x="334.8" y="212.8" width="2.2" height="2.2"/>
<rect x="334.8" y="222.2" width="2.2" height="2.2"/>
</g>
<g stroke="#c8c8c8" stroke-width="0.9" fill="none"><path d="M328.4 213.9 H333.7 M328.4 223.3 H333.7 M326.2 216.2 V221.1 M335.9 216.2 V221.1"/></g>
<path d="M315.1 227.9 H345.6 V241.8 Q345.6 244.8 342.6 244.8 H318.1 Q315.1 244.8 315.1 241.8 Z" fill="#585858"/>
<circle cx="331.1" cy="236.3" r="5.7" fill="none" stroke="#c4c8c8" stroke-width="1" stroke-dasharray="3.2 1.2" stroke-dashoffset="1"/>
<g stroke="#b8c4c6" stroke-width="0.9" fill="none"><path d="M331.1 232.5 V240.1 M327.3 236.3 H334.9"/></g>
<path d="M331.1 231.6 L332.3 233.2 H329.9 Z M331.1 241 L332.3 239.4 H329.9 Z M326.4 236.3 L328 235.1 V237.5 Z M335.8 236.3 L334.2 235.1 V237.5 Z" fill="#c4cccc"/>
<path d="M337.6 229.6 V232.4 L334.8 229.6 Z M324.4 242.9 V240.1 L327.2 242.9 Z" fill="#d0d0d0"/>
<path d="M318.1 248.2 H333.3 V265 H318.1 Q315.1 265 315.1 262 V251.2 Q315.1 248.2 318.1 248.2 Z" fill="#585858"/>
<path d="M334.8 248.2 H343 Q346 248.2 346 251.2 V262 Q346 265 343 265 H334.8 Z" fill="#585858"/>
<g stroke="#c8c8c8" fill="none" stroke-linecap="round"><path d="M320.2 261.8 L329.4 252.3" stroke-width="1.6"/><path d="M323.3 255 L329.5 261.2" stroke-width="1.7"/></g>
<path d="M319 252.6 A2.6 2.6 0 1 0 322.2 251 L322.6 253.3 L321 254.2 Z" fill="#c8c8c8"/>
<path d="M327.2 259 L329.4 261.2" stroke="#c8c8c8" stroke-width="2.6" stroke-linecap="round"/>
<circle cx="329.9" cy="261.8" r="0.6" fill="#e09090"/>
<path d="M336.8 255.1 H344.1 L340.45 259.6 Z" fill="#d2d2d2"/>
<g fill="#ffffff"><circle cx="675.4" cy="257.6" r="2.3"/><circle cx="679.2" cy="257.1" r="2.6"/><rect x="673.8" y="258.6" width="7.6" height="5.2" rx="1.2"/><path d="M680.8 260 L683.5 258.6 V263.4 L680.8 262 Z"/><circle cx="673" cy="260.5" r="1.5"/></g>
<g stroke="#e6c9a4" stroke-width="1" stroke-linecap="round">
<path d="M786.00 263.50 L789.40 263.50"/>
<path d="M785.30 266.10 L787.38 267.30"/>
<path d="M783.40 268.00 L784.60 270.08"/>
<path d="M780.80 268.70 L780.80 272.10"/>
<path d="M778.20 268.00 L777.00 270.08"/>
<path d="M776.30 266.10 L774.22 267.30"/>
<path d="M775.60 263.50 L772.20 263.50"/>
<path d="M776.30 260.90 L774.22 259.70"/>
<path d="M778.20 259.00 L777.00 256.92"/>
<path d="M780.80 258.30 L780.80 254.90"/>
<path d="M783.40 259.00 L784.60 256.92"/>
<path d="M785.30 260.90 L787.38 259.70"/>
</g>
<circle cx="780.8" cy="263.5" r="3.7" fill="#f6e9c6"/>
<defs><filter id="sh" x="-20%" y="-10%" width="140%" height="125%"><feGaussianBlur in="SourceAlpha" stdDeviation="4"/><feOffset dx="0" dy="3"/><feComponentTransfer><feFuncA type="linear" slope="0.26"/></feComponentTransfer><feMerge><feMergeNode/><feMergeNode in="SourceGraphic"/></feMerge></filter></defs>
<clipPath id="mclip"><rect x="0" y="36.7" width="1024" height="540"/></clipPath><g clip-path="url(#mclip)">
<path d="M0.3 38.4 Q0.3 36.4 2.3 36.4 H250.3 Q252.3 36.4 252.3 38.4 V292.4 Q252.3 296.4 248.3 296.4 H4.3 Q0.3 296.4 0.3 292.4 Z" fill="#f9f9f9" stroke="#d6d6d6" stroke-width="0.6" filter="url(#sh)"/></g>
<rect x="5" y="121.4" width="242.6" height="18.3" fill="#f0f0f0" rx="3" />
<text x="32.3" y="50.85" font-size="10.7" fill="#222222" textLength="50.0" lengthAdjust="spacingAndGlyphs" >New Scene</text>
<text x="200.1" y="50.85" font-size="10.7" fill="#222222" textLength="30.9" lengthAdjust="spacingAndGlyphs" >Ctrl+N</text>
<text x="32.3" y="69.64349999999999" font-size="10.7" fill="#222222" textLength="54.2" lengthAdjust="spacingAndGlyphs" >Open Scene</text>
<text x="200.1" y="69.64349999999999" font-size="10.7" fill="#222222" textLength="30.9" lengthAdjust="spacingAndGlyphs" >Ctrl+O</text>
<text x="32.3" y="88.437" font-size="10.7" fill="#222222" textLength="87.7" lengthAdjust="spacingAndGlyphs" >Open Recent Scene</text>
<text x="32.3" y="114.768" font-size="10.7" fill="#222222" textLength="20.7" lengthAdjust="spacingAndGlyphs" >Save</text>
<text x="202.6" y="114.768" font-size="10.7" fill="#222222" textLength="28.4" lengthAdjust="spacingAndGlyphs" >Ctrl+S</text>
<text x="32.3" y="133.7625" font-size="10.7" fill="#222222" textLength="41.9" lengthAdjust="spacingAndGlyphs" >Save As...</text>
<text x="175.4" y="133.7625" font-size="10.7" fill="#222222" textLength="55.6" lengthAdjust="spacingAndGlyphs" >Ctrl+Shift+S</text>
<text x="32.3" y="152.556" font-size="10.7" fill="#222222" textLength="113.4" lengthAdjust="spacingAndGlyphs" >Save As Scene Template...</text>
<text x="32.3" y="179.08799999999997" font-size="10.7" fill="#222222" textLength="62.1" lengthAdjust="spacingAndGlyphs" >New Project...</text>
<text x="32.3" y="198.08249999999998" font-size="10.7" fill="#222222" textLength="66.5" lengthAdjust="spacingAndGlyphs" >Open Project...</text>
<text x="32.3" y="216.876" font-size="10.7" fill="#222222" textLength="54.9" lengthAdjust="spacingAndGlyphs" >Save Project</text>
<text x="32.3" y="243.40799999999996" font-size="10.7" fill="#222222" textLength="69.2" lengthAdjust="spacingAndGlyphs" >Build Settings...</text>
<text x="174.4" y="243.40799999999996" font-size="10.7" fill="#222222" textLength="56.6" lengthAdjust="spacingAndGlyphs" >Ctrl+Shift+B</text>
<text x="32.3" y="262.40250000000003" font-size="10.7" fill="#222222" textLength="64.9" lengthAdjust="spacingAndGlyphs" >Build And Run</text>
<text x="201.9" y="262.40250000000003" font-size="10.7" fill="#222222" textLength="29.1" lengthAdjust="spacingAndGlyphs" >Ctrl+B</text>
<text x="32.3" y="288.9345" font-size="10.7" fill="#222222" textLength="16.6" lengthAdjust="spacingAndGlyphs" >Exit</text>
<rect x="8" y="98.0" width="237" height="1" fill="#dcdcdc" />
<rect x="8" y="162.1" width="237" height="1" fill="#dcdcdc" />
<rect x="8" y="226.1" width="237" height="1" fill="#dcdcdc" />
<rect x="8" y="270.9" width="237" height="1" fill="#dcdcdc" />
<path d="M234.9 82.4 L238.6 85.7 L234.9 89" fill="none" stroke="#222" stroke-width="1.15"/>
<path d="M85.6 130.5 V144.8 L89.2 141.9 L91.7 146.7 L93.9 145.7 L91.6 141.1 L95.8 140.6 Z" fill="#ffffff" stroke="#2a2a2a" stroke-width="0.9" stroke-linejoin="round"/>
</svg>
</body></html>
